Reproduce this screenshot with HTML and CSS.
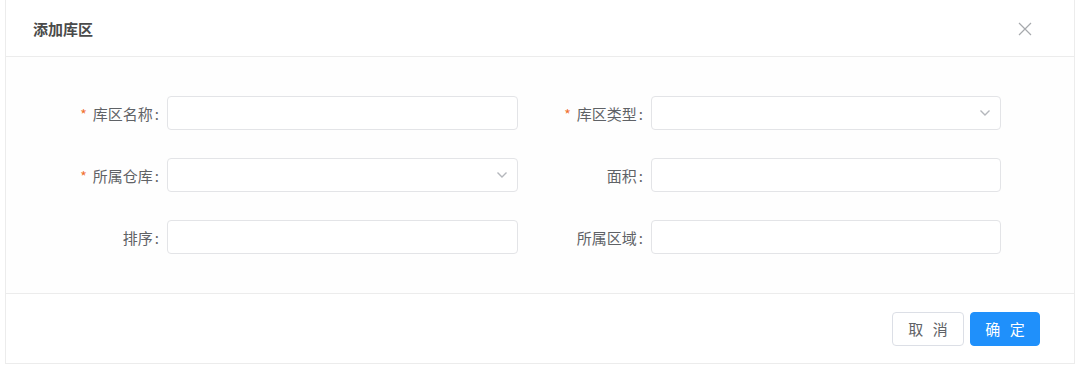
FILE: index.html
```html
<!DOCTYPE html>
<html lang="zh-CN">
<head>
  <meta charset="UTF-8">
  <meta name="viewport" content="width=device-width, initial-scale=1.0">
  <title>添加库区</title>
  <link rel="stylesheet" href="styles.css">
</head>
<body>
  <div class="dialog">
    <div class="dialog-header">
      <span class="dialog-title">添加库区</span>
      <span class="dialog-close">
        <svg width="14" height="14" viewBox="0 0 14 14"><path d="M1 1L13 13M13 1L1 13" stroke="#a6a9ad" stroke-width="1.2" fill="none"/></svg>
      </span>
    </div>
    <div class="dialog-body">
      <div class="form">
        <div class="form-item">
          <label class="form-label"><span class="req">*</span>库区名称<span class="colon">:</span></label>
          <div class="input"></div>
        </div>
        <div class="form-item">
          <label class="form-label"><span class="req">*</span>库区类型<span class="colon">:</span></label>
          <div class="input select">
            <svg class="arrow" width="12" height="8" viewBox="0 0 12 8"><path d="M1.5 1.5L6 6L10.5 1.5" stroke="#b4b7bc" stroke-width="1.4" fill="none"/></svg>
          </div>
        </div>
        <div class="form-item">
          <label class="form-label"><span class="req">*</span>所属仓库<span class="colon">:</span></label>
          <div class="input select">
            <svg class="arrow" width="12" height="8" viewBox="0 0 12 8"><path d="M1.5 1.5L6 6L10.5 1.5" stroke="#b4b7bc" stroke-width="1.4" fill="none"/></svg>
          </div>
        </div>
        <div class="form-item">
          <label class="form-label">面积<span class="colon">:</span></label>
          <div class="input"></div>
        </div>
        <div class="form-item">
          <label class="form-label">排序<span class="colon">:</span></label>
          <div class="input"></div>
        </div>
        <div class="form-item">
          <label class="form-label">所属区域<span class="colon">:</span></label>
          <div class="input"></div>
        </div>
      </div>
    </div>
    <div class="dialog-footer">
      <button class="btn">取 消</button>
      <button class="btn btn-primary">确 定</button>
    </div>
  </div>
</body>
</html>
```

FILE: styles.css
```css
body {
  margin: 0;
  background: #fff;
  font-family: "Noto Sans CJK SC", "Noto Sans", sans-serif;
  font-size: 14px;
  color: #606266;
}
.dialog {
  margin-left: 5px;
  width: 1070px;
  height: 364px;
  border: 1px solid #ececec;
  border-top: none;
  box-sizing: border-box;
  display: flex;
  flex-direction: column;
}
.dialog-header {
  height: 57px;
  box-sizing: border-box;
  border-bottom: 1px solid #ececec;
  display: flex;
  align-items: center;
  justify-content: space-between;
  padding: 0 42px 0 27px;
}
.dialog-title {
  font-size: 15px;
  font-weight: bold;
  color: #4a4a4a;
}
.dialog-close {
  display: flex;
  margin-top: 1px;
}
.dialog-body {
  flex: 1;
  padding: 39px 0 0 61px;
  background: #fefefe;
  border-bottom: 1px solid #ececec;
}
.form {
  display: grid;
  grid-template-columns: 451px 450px;
  column-gap: 33px;
  row-gap: 28px;
}
.form-item {
  display: flex;
  align-items: center;
  height: 34px;
}
.form-label {
  width: 100px;
  padding-right: 8px;
  box-sizing: border-box;
  text-align: right;
  font-size: 15px;
  color: #5f6266;
  white-space: nowrap;
}
.colon {
  margin-left: 2px;
}
.req {
  color: #f0702f;
  margin-right: 6px;
  font-size: 14px;
}
.input {
  flex: 1;
  height: 34px;
  box-sizing: border-box;
  border: 1px solid #e3e4e7;
  border-radius: 4px;
  background: #fff;
  display: flex;
  align-items: center;
  justify-content: flex-end;
  padding-right: 9px;
}
.arrow {
  display: block;
}
.dialog-footer {
  height: 69px;
  box-sizing: border-box;
  display: flex;
  align-items: center;
  justify-content: flex-end;
  gap: 6px;
  padding-right: 34px;
}
.btn {
  height: 34px;
  width: 72px;
  font-family: inherit;
  font-size: 15px;
  border: 1px solid #dcdfe6;
  border-radius: 4px;
  background: #fff;
  color: #606266;
  letter-spacing: 3px;
  padding: 0 0 0 3px;
}
.btn-primary {
  width: 70px;
  background: #1f90fb;
  border-color: #1f90fb;
  color: #fff;
}
```
